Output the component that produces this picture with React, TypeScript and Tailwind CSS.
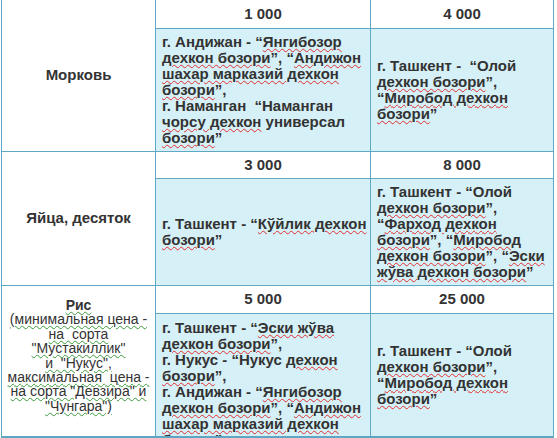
import React from "react";

const Red = ({ children }: { children: React.ReactNode }) => (
  <span className="underline decoration-wavy decoration-[#e03030] decoration-1 underline-offset-[1px]">
    {children}
  </span>
);

const Green = ({ children }: { children: React.ReactNode }) => (
  <span className="underline decoration-wavy decoration-[#3a9a3a] decoration-1 underline-offset-[1px]">
    {children}
  </span>
);

function Price({ value }: { value: string }) {
  return (
    <div className="flex items-center justify-center bg-white text-[15px] font-bold">
      {value}
    </div>
  );
}

function Markets({
  lines,
  top,
}: {
  lines: React.ReactNode[];
  top?: boolean;
}) {
  return (
    <div
      className={`flex overflow-hidden bg-[#d6f0f7] px-[6px] text-[15px] font-bold leading-[16px] ${
        top ? "items-start pt-[6px]" : "items-center"
      }`}
    >
      <div>
        {lines.map((line, i) => (
          <div key={i} className="whitespace-nowrap">
            {line}
          </div>
        ))}
      </div>
    </div>
  );
}

function Product({ children }: { children: React.ReactNode }) {
  return (
    <div className="row-span-2 flex items-center justify-center bg-white px-2 text-center text-[15px] font-bold">
      {children}
    </div>
  );
}

const rice = [
  <span className="font-bold">Рис</span>,
  <> (минимальная цена -</>,
  <>на &nbsp;сорта</>,
  <>"Мустакиллик"</>,
  <>и &nbsp;"Нукус",</>,
  <>максимальная &nbsp;цена -</>,
  <>на сорта "Девзира" и</>,
  <>"Чунгара")</>,
];

export default function App() {
  return (
    <div
      className="h-[438px] w-[557px] overflow-hidden bg-white text-[#333]"
      style={{ fontFamily: '"Liberation Sans", Arial, sans-serif' }}
    >
      <div className="ml-px grid w-[553px] grid-cols-[153px_214px_182px] grid-rows-[28px_122px_26px_106px_27px_122px] gap-px border-b-2 border-[#5fa6c2] bg-[#5fa9c6] px-px">
        <Product>Морковь</Product>
        <Price value="1 000" />
        <Price value="4 000" />
        <Markets
          lines={[
            <>г. Андижан - “<Red>Янгибозор</Red></>,
            <><Red>дехкон бозори</Red>”, “<Red>Андижон</Red></>,
            <><Red>шахар марказий дехкон</Red></>,
            <><Red>бозори</Red>”,</>,
            <>г. Наманган &nbsp;“Наманган</>,
            <><Red>чорсу дехкон</Red> универсал</>,
            <><Red>бозори</Red>”</>,
          ]}
        />
        <Markets
          lines={[
            <>г. Ташкент - &nbsp;“Олой</>,
            <><Red>дехкон бозори</Red>”,</>,
            <>“<Red>Миробод дехкон</Red></>,
            <><Red>бозори</Red>”</>,
          ]}
        />

        <Product>Яйца, десяток</Product>
        <Price value="3 000" />
        <Price value="8 000" />
        <Markets
          lines={[
            <>г. Ташкент - “<Red>Кўйлик дехкон</Red></>,
            <><Red>бозори</Red>”</>,
          ]}
        />
        <Markets
          lines={[
            <>г. Ташкент - “Олой</>,
            <><Red>дехкон бозори</Red>”,</>,
            <>“<Red>Фарход дехкон</Red></>,
            <><Red>бозори</Red>”, “<Red>Миробод</Red></>,
            <><Red>дехкон бозори</Red>”, “<Red>Эски</Red></>,
            <><Red>жўва дехкон бозори</Red>”</>,
          ]}
        />

        <div className="row-span-2 flex items-start justify-center bg-white pt-[12px] text-center text-[14px] leading-[14.4px]">
          <div>
            {rice.map((line, i) => (
              <div key={i} className="whitespace-nowrap">
                <Green>{line}</Green>
              </div>
            ))}
          </div>
        </div>
        <Price value="5 000" />
        <Price value="25 000" />
        <Markets
          top
          lines={[
            <>г. Ташкент - “<Red>Эски жўва</Red></>,
            <><Red>дехкон бозори</Red>”,</>,
            <>г. Нукус - “Нукус <Red>дехкон</Red></>,
            <><Red>бозори</Red>”,</>,
            <>г. Андижан - “<Red>Янгибозор</Red></>,
            <><Red>дехкон бозори</Red>”, “<Red>Андижон</Red></>,
            <><Red>шахар марказий дехкон</Red></>,
            <><Red>бозори</Red>”</>,
          ]}
        />
        <Markets
          lines={[
            <>г. Ташкент - “Олой</>,
            <><Red>дехкон бозори</Red>”,</>,
            <>“<Red>Миробод дехкон</Red></>,
            <><Red>бозори</Red>”</>,
          ]}
        />
      </div>
    </div>
  );
}
